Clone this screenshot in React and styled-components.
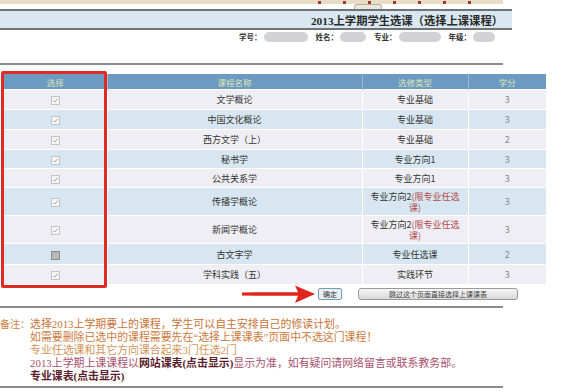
import React from "react";
import styled, { createGlobalStyle } from "styled-components";

const GlobalStyle = createGlobalStyle`
  body {
    margin: 0;
    background: #ffffff;
    font-family: "Liberation Serif", "Noto Sans CJK SC", serif;
  }
`;

const Page = styled.div`
  width: 568px;
  height: 392px;
  overflow: hidden;
  position: relative;
`;

const TopStrip = styled.div`
  width: 503px;
  height: 4px;
  background: #e9dcc6;
  display: flex;
  gap: 22px;
  padding-left: 318px;
  box-sizing: border-box;
`;

const Dot = styled.span`
  width: 3px;
  height: 3px;
  margin-top: 1px;
  background: #9a3a2a;
`;

const Tab = styled.div`
  width: 26px;
  height: 4px;
  margin-left: 354px;
  border: 1px solid #b8b0a0;
  border-bottom: none;
  border-radius: 3px 3px 0 0;
  background: #ece6da;
`;

const TitleBar = styled.div`
  width: 503px;
  height: 17px;
  background: #d9e8f0;
  border-top: 2px solid #6e7378;
  border-bottom: 2px solid #6e7378;
  display: flex;
  align-items: center;
  justify-content: flex-end;
  padding-right: 9px;
  box-sizing: content-box;
  font-family: "Liberation Serif", "Noto Sans CJK SC", serif;
  font-weight: 700;
  font-size: 11.3px;
  color: #2a2a2a;
`;

const InfoRow = styled.div`
  width: 503px;
  height: 13px;
  display: flex;
  align-items: center;
  justify-content: flex-end;
  padding-right: 8px;
  gap: 8px;
  box-sizing: border-box;
  font-family: "Noto Sans CJK SC", sans-serif;
  font-size: 7.5px;
  font-weight: 700;
  color: #333;
`;

const Blur = styled.span`
  display: inline-block;
  width: ${({ w }) => w}px;
  height: 10px;
  border-radius: 5px;
  background: #d2d2d5;
  margin-left: 2px;
  vertical-align: middle;
`;

const Divider = styled.div`
  width: 503px;
  border-top: 2px solid #8a8c8e;
  margin-top: ${({ top }) => top}px;
`;

const TableArea = styled.div`
  position: relative;
  margin-top: 9px;
  padding-left: 4px;
`;

const Table = styled.table`
  border-collapse: collapse;
  width: 542px;
  table-layout: fixed;
  font-family: "Noto Sans CJK SC", sans-serif;
  font-size: 9px;
`;

const Th = styled.th`
  background: #6d9ac2;
  color: #dde6b4;
  font-weight: 400;
  font-size: 8.5px;
  height: 15px;
  padding: 0;
  border-left: 1px solid #9ab8d0;
  &:first-child { border-left: none; }
`;

const Tr = styled.tr`
  height: ${({ h }) => h}px;
  background: ${({ alt }) => (alt ? "#d7e6f0" : "#efeef5")};
`;

const Td = styled.td`
  text-align: center;
  padding: 0 4px;
  line-height: 11px;
  color: ${({ muted }) => (muted ? "#888" : "#333")};
  border-top: 1px solid #ffffff;
  border-left: 1px solid #ffffff;
  &:first-child { border-left: none; }
`;

const Limit = styled.span`
  color: #b04848;
`;

const Box = styled.span`
  display: inline-block;
  width: 7px;
  height: 7px;
  border: 1px solid ${({ off }) => (off ? "#8c8c8c" : "#c4c4c4")};
  background: ${({ off }) => (off ? "#b8b8b8" : "#f6f6f6")};
  position: relative;
  vertical-align: middle;
`;

const RedFrame = styled.div`
  position: absolute;
  left: 1px;
  top: -3px;
  width: 100px;
  height: 211px;
  border: 3.5px solid #e02a24;
  border-radius: 2px;
  pointer-events: none;
`;

const ButtonRow = styled.div`
  display: flex;
  align-items: center;
  height: 17px;
  margin-top: 2px;
  padding-left: 240px;
`;

const OkButton = styled.button`
  margin-left: 2px;
  width: 24px;
  height: 12px;
  padding: 0;
  border: 1.5px solid #6aa0b8;
  border-radius: 2px;
  background: #e8eef2;
  font-family: "Noto Sans CJK SC", sans-serif;
  font-size: 7px;
  color: #333;
  line-height: 9px;
`;

const SkipButton = styled.button`
  margin-left: 16px;
  width: 160px;
  height: 12px;
  padding: 0;
  border: 1px solid #9a9a9a;
  border-radius: 3px;
  background: linear-gradient(#f6f6f6, #d8d8d8);
  font-family: "Noto Sans CJK SC", sans-serif;
  font-size: 7px;
  color: #444;
  line-height: 10px;
`;

const Notes = styled.div`
  display: grid;
  grid-template-columns: 30px auto;
  margin-top: 10px;
  font-family: "Liberation Serif", "Noto Sans CJK SC", serif;
  font-size: 10.9px;
  line-height: 13px;
`;

const Label = styled.div`
  color: #cf8040;
  white-space: nowrap;
  font-size: 10px;
  grid-row: 1;
`;

const Line = styled.div`
  grid-column: 2;
  color: ${({ c }) => c};
  font-weight: ${({ bold }) => (bold ? 700 : 400)};
  white-space: nowrap;
`;

const Strong = styled.span`
  color: #5a1e2c;
  font-weight: 700;
`;

const Check = () => (
  <svg width="7" height="7" viewBox="0 0 7 7" style={{ position: "absolute", left: 0, top: 0 }}>
    <path d="M1.3 3.6 L2.8 5.1 L5.8 1.6" fill="none" stroke="#9a9a9a" strokeWidth="0.9" />
  </svg>
);

const Arrow = () => (
  <svg width="76" height="20" viewBox="0 0 76 20">
    <path d="M2 8.4 L58 8.2 L55 1.5 L75 10 L55 19 L58 11.8 L2 11.6 Z" fill="#e0241e" />
  </svg>
);

const rows = [
  { name: "文学概论", type: "专业基础", credit: 3, h: 20 },
  { name: "中国文化概论", type: "专业基础", credit: 3, h: 20 },
  { name: "西方文学（上）", type: "专业基础", credit: 2, h: 20 },
  { name: "秘书学", type: "专业方向1", credit: 3, h: 19 },
  { name: "公共关系学", type: "专业方向1", credit: 3, h: 19 },
  { name: "传播学概论", type: "专业方向2", limit: true, credit: 3, h: 28 },
  { name: "新闻学概论", type: "专业方向2", limit: true, credit: 3, h: 28 },
  { name: "古文字学", type: "专业任选课", credit: 2, h: 21, off: true },
  { name: "学科实践（五）", type: "实践环节", credit: 3, h: 19 },
];

export default function App() {
  return (
    <Page>
      <GlobalStyle />
      <TopStrip>
        {[0, 1, 2, 3, 4, 5, 6].map((i) => (
          <Dot key={i} />
        ))}
      </TopStrip>
      <Tab />
      <TitleBar>2013上学期学生选课（选择上课课程）</TitleBar>
      <InfoRow>
        <span>学号：<Blur w={44} /></span>
        <span>姓名：<Blur w={26} /></span>
        <span>专业：<Blur w={42} /></span>
        <span>年级：<Blur w={22} /></span>
      </InfoRow>
      <Divider top={20} />
      <TableArea>
        <Table>
          <colgroup>
            <col style={{ width: 103 }} />
            <col style={{ width: 255 }} />
            <col style={{ width: 106 }} />
            <col style={{ width: 78 }} />
          </colgroup>
          <thead>
            <tr>
              <Th>选择</Th>
              <Th>课程名称</Th>
              <Th>选修类型</Th>
              <Th>学分</Th>
            </tr>
          </thead>
          <tbody>
            {rows.map((r, i) => (
              <Tr key={r.name} h={r.h} alt={i % 2 === 1}>
                <Td>
                  <Box off={r.off}>{!r.off && <Check />}</Box>
                </Td>
                <Td>{r.name}</Td>
                <Td>
                  {r.type}
                  {r.limit && <Limit>(限专业任选课)</Limit>}
                </Td>
                <Td muted>{r.credit}</Td>
              </Tr>
            ))}
          </tbody>
        </Table>
        <RedFrame />
      </TableArea>
      <ButtonRow>
        <Arrow />
        <OkButton>确定</OkButton>
        <SkipButton>跳过这个页面直接选择上课课表</SkipButton>
      </ButtonRow>
      <Divider top={3} />
      <Notes>
        <Label>备注：</Label>
        <Line c="#c87238" style={{ gridRow: 1 }}>
          选择2013上学期要上的课程，学生可以自主安排自己的修读计划。
        </Line>
        <Line c="#cc7a40">如需要删除已选中的课程需要先在“选择上课课表”页面中不选这门课程！</Line>
        <Line c="#d39458">专业任选课和其它方向课合起来3门任选2门</Line>
        <Line c="#a8506e">
          2013上学期上课课程以<Strong>网站课表(点击显示)</Strong>显示为准，如有疑问请网络留言或联系教务部。
        </Line>
        <Line c="#5a1e2c" bold>
          专业课表(点击显示)
        </Line>
      </Notes>
      <Divider top={3} />
    </Page>
  );
}
